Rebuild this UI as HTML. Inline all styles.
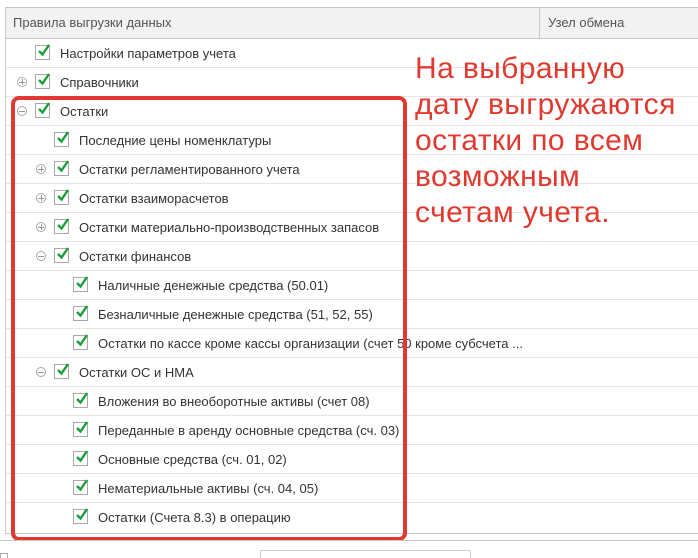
<!DOCTYPE html>
<html><head><meta charset="utf-8"><style>
html,body{margin:0;width:698px;height:558px;overflow:hidden;}
body{background:#fff;position:relative;font-family:"Liberation Sans","DejaVu Sans",sans-serif;}
.tbl{position:absolute;left:5px;top:7px;width:700px;height:525px;border:1px solid #c8c8c8;}
.hdr{position:absolute;left:6px;top:8px;width:700px;height:30px;background:#f2f2f2;border-bottom:1px solid #c8c8c8;}
.hdr span{position:absolute;top:7px;font-size:13px;color:#555;}
.vdiv{position:absolute;left:539px;top:8px;width:1px;height:30px;background:#c8c8c8;}
.row{position:absolute;left:6px;width:700px;height:29px;border-bottom:1px solid #e6e6e6;}
.cb{position:absolute;top:7px;width:13px;height:13px;border:1px solid #a8a8a8;background:#fff;}
.cb svg{position:absolute;left:0;top:-3px;}
.t{position:absolute;top:8px;font-size:13px;color:#333;white-space:nowrap;}
.ex{position:absolute;top:10px;width:8px;height:8px;border:1px solid #aaa;border-radius:50%;}
.ex:before{content:"";position:absolute;left:1px;top:3.5px;width:6px;height:1px;background:#999;}
.ex.p:after{content:"";position:absolute;left:3.5px;top:1px;width:1px;height:6px;background:#999;}
.red{position:absolute;left:11px;top:96px;width:388px;height:437px;border:4px solid #e03a30;border-radius:8px;}
.note{position:absolute;left:415px;top:51px;font-size:30px;line-height:36px;color:#e03a30;letter-spacing:0.4px;}
.bline{position:absolute;left:0;top:540px;width:698px;height:1px;background:#c8c8c8;}
.bbox{position:absolute;left:260px;top:550px;width:209px;height:20px;border:1px solid #ccc;border-radius:2px;}
.sq{position:absolute;left:0;top:553px;width:6px;height:8px;border:1px solid #aaa;}
</style></head><body>
<div class="tbl"></div>
<div class="hdr"><span style="left:7px">Правила выгрузки данных</span><span style="left:542px">Узел обмена</span></div>
<div class="vdiv"></div>

<div class="row" style="top:38px"><div class="cb" style="left:29px"><svg width="16" height="16"><path d="M3 8 L6.5 11.5 L13 2" stroke="#1a9e3a" stroke-width="2.4" fill="none"/></svg></div><div class="t" style="left:54px">Настройки параметров учета</div></div>
<div class="row" style="top:67px"><div class="ex p" style="left:11px"></div><div class="cb" style="left:29px"><svg width="16" height="16"><path d="M3 8 L6.5 11.5 L13 2" stroke="#1a9e3a" stroke-width="2.4" fill="none"/></svg></div><div class="t" style="left:54px">Справочники</div></div>
<div class="row" style="top:96px"><div class="ex" style="left:11px"></div><div class="cb" style="left:29px"><svg width="16" height="16"><path d="M3 8 L6.5 11.5 L13 2" stroke="#1a9e3a" stroke-width="2.4" fill="none"/></svg></div><div class="t" style="left:54px">Остатки</div></div>
<div class="row" style="top:125px"><div class="cb" style="left:48px"><svg width="16" height="16"><path d="M3 8 L6.5 11.5 L13 2" stroke="#1a9e3a" stroke-width="2.4" fill="none"/></svg></div><div class="t" style="left:73px">Последние цены номенклатуры</div></div>
<div class="row" style="top:154px"><div class="ex p" style="left:30px"></div><div class="cb" style="left:48px"><svg width="16" height="16"><path d="M3 8 L6.5 11.5 L13 2" stroke="#1a9e3a" stroke-width="2.4" fill="none"/></svg></div><div class="t" style="left:73px">Остатки регламентированного учета</div></div>
<div class="row" style="top:183px"><div class="ex p" style="left:30px"></div><div class="cb" style="left:48px"><svg width="16" height="16"><path d="M3 8 L6.5 11.5 L13 2" stroke="#1a9e3a" stroke-width="2.4" fill="none"/></svg></div><div class="t" style="left:73px">Остатки взаиморасчетов</div></div>
<div class="row" style="top:212px"><div class="ex p" style="left:30px"></div><div class="cb" style="left:48px"><svg width="16" height="16"><path d="M3 8 L6.5 11.5 L13 2" stroke="#1a9e3a" stroke-width="2.4" fill="none"/></svg></div><div class="t" style="left:73px">Остатки материально-производственных запасов</div></div>
<div class="row" style="top:241px"><div class="ex" style="left:30px"></div><div class="cb" style="left:48px"><svg width="16" height="16"><path d="M3 8 L6.5 11.5 L13 2" stroke="#1a9e3a" stroke-width="2.4" fill="none"/></svg></div><div class="t" style="left:73px">Остатки финансов</div></div>
<div class="row" style="top:270px"><div class="cb" style="left:67px"><svg width="16" height="16"><path d="M3 8 L6.5 11.5 L13 2" stroke="#1a9e3a" stroke-width="2.4" fill="none"/></svg></div><div class="t" style="left:92px">Наличные денежные средства (50.01)</div></div>
<div class="row" style="top:299px"><div class="cb" style="left:67px"><svg width="16" height="16"><path d="M3 8 L6.5 11.5 L13 2" stroke="#1a9e3a" stroke-width="2.4" fill="none"/></svg></div><div class="t" style="left:92px">Безналичные денежные средства (51, 52, 55)</div></div>
<div class="row" style="top:328px"><div class="cb" style="left:67px"><svg width="16" height="16"><path d="M3 8 L6.5 11.5 L13 2" stroke="#1a9e3a" stroke-width="2.4" fill="none"/></svg></div><div class="t" style="left:92px">Остатки по кассе кроме кассы организации (счет 50 кроме субсчета ...</div></div>
<div class="row" style="top:357px"><div class="ex" style="left:30px"></div><div class="cb" style="left:48px"><svg width="16" height="16"><path d="M3 8 L6.5 11.5 L13 2" stroke="#1a9e3a" stroke-width="2.4" fill="none"/></svg></div><div class="t" style="left:73px">Остатки ОС и НМА</div></div>
<div class="row" style="top:386px"><div class="cb" style="left:67px"><svg width="16" height="16"><path d="M3 8 L6.5 11.5 L13 2" stroke="#1a9e3a" stroke-width="2.4" fill="none"/></svg></div><div class="t" style="left:92px">Вложения во внеоборотные активы (счет 08)</div></div>
<div class="row" style="top:415px"><div class="cb" style="left:67px"><svg width="16" height="16"><path d="M3 8 L6.5 11.5 L13 2" stroke="#1a9e3a" stroke-width="2.4" fill="none"/></svg></div><div class="t" style="left:92px">Переданные в аренду основные средства (сч. 03)</div></div>
<div class="row" style="top:444px"><div class="cb" style="left:67px"><svg width="16" height="16"><path d="M3 8 L6.5 11.5 L13 2" stroke="#1a9e3a" stroke-width="2.4" fill="none"/></svg></div><div class="t" style="left:92px">Основные средства (сч. 01, 02)</div></div>
<div class="row" style="top:473px"><div class="cb" style="left:67px"><svg width="16" height="16"><path d="M3 8 L6.5 11.5 L13 2" stroke="#1a9e3a" stroke-width="2.4" fill="none"/></svg></div><div class="t" style="left:92px">Нематериальные активы (сч. 04, 05)</div></div>
<div class="row" style="top:502px;border-bottom:none"><div class="cb" style="left:67px"><svg width="16" height="16"><path d="M3 8 L6.5 11.5 L13 2" stroke="#1a9e3a" stroke-width="2.4" fill="none"/></svg></div><div class="t" style="left:92px">Остатки (Счета 8.3) в операцию</div></div>

<div class="red"></div>
<div class="note">На выбранную<br>дату выгружаются<br>остатки по всем<br>возможным<br>счетам учета.</div>
<div class="bline"></div>
<div class="sq"></div>
<div class="bbox"></div>
</body></html>
